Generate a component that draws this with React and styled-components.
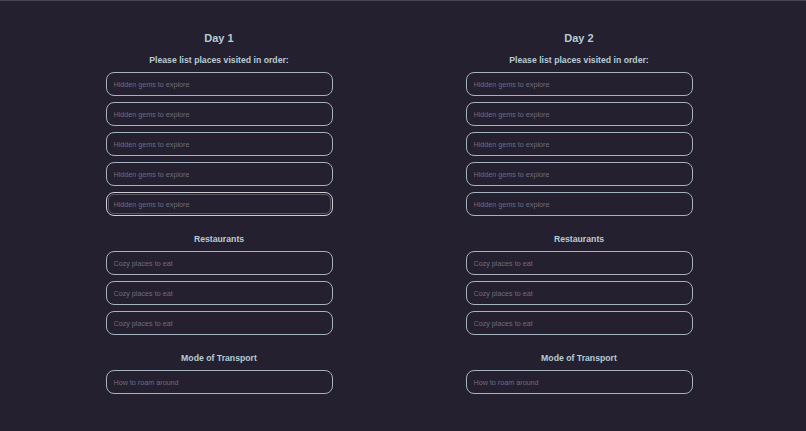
import React, { useEffect } from 'react'
import styled, { createGlobalStyle } from 'styled-components'

const days = [
  { id: 1, title: 'Day 1' },
  { id: 2, title: 'Day 2' },
]

const sections = [
  { id: 'places', label: 'Please list places visited in order:', count: 5, hint: 'Hidden gems to explore' },
  { id: 'food', label: 'Restaurants', count: 3, hint: 'Cozy places to eat' },
  { id: 'transport', label: 'Mode of Transport', count: 1, hint: 'How to roam around' },
]

const App = () => {
  useEffect(() => {
    window.scrollTo(0, 17)
  }, [])

  return (
    <>
      <Global />
      <Page>
        <TopStrip />
        <Columns>
          {days.map((day) => (
            <Day key={day.id}>
              <Title>{day.title}</Title>
              {sections.map((sec) => (
                <Section key={sec.id}>
                  <Label>{sec.label}</Label>
                  {Array.from({ length: sec.count }).map((_, i) => (
                    <Field
                      key={i}
                      placeholder={sec.hint}
                      $active={sec.id === 'places' && i === 4 && day.id === 1}
                    />
                  ))}
                </Section>
              ))}
            </Day>
          ))}
        </Columns>
      </Page>
    </>
  )
}

export default App

const Global = createGlobalStyle`
  html, body {
    margin: 0;
    padding: 0;
    background: #252030;
  }
  * { box-sizing: border-box; }
`

const Page = styled.div`
  min-height: 534px;
  background: #252030;
  font-family: "Liberation Sans", Arial, sans-serif;
`

const TopStrip = styled.div`
  height: 18px;
  border-bottom: 1px solid #4a4658;
`

const Columns = styled.div`
  display: grid;
  grid-template-columns: repeat(2, 360px);
  justify-content: center;
  padding: 30px 8px 120px 0;
`

const Day = styled.div`
  display: flex;
  flex-direction: column;
  align-items: center;
`

const Title = styled.h2`
  margin: 0 0 3px;
  font-size: 11px;
  line-height: 14px;
  font-weight: 700;
  color: #b8ccd4;
`

const Section = styled.div`
  display: flex;
  flex-direction: column;
  align-items: center;
  gap: 6px;
  margin-top: 6px;
  & + & {
    margin-top: 17px;
  }
`

const Label = styled.h3`
  margin: 0;
  font-size: 8.7px;
  line-height: 12px;
  font-weight: 700;
  color: #b8ccd4;
`

const Field = styled.input`
  width: 227px;
  height: 24px;
  padding: 0 7px;
  border: 1.5px solid ${(p) => (p.$active ? '#cfcfd4' : '#a3b3bf')};
  outline: ${(p) => (p.$active ? '1px solid #5a5866' : 'none')};
  outline-offset: -3px;
  border-radius: 8px;
  background: transparent;
  color: #d0d6dc;
  font-family: "Liberation Sans", Arial, sans-serif;
  font-size: 7.2px;
  &::placeholder {
    color: #706c7c;
  }
`
